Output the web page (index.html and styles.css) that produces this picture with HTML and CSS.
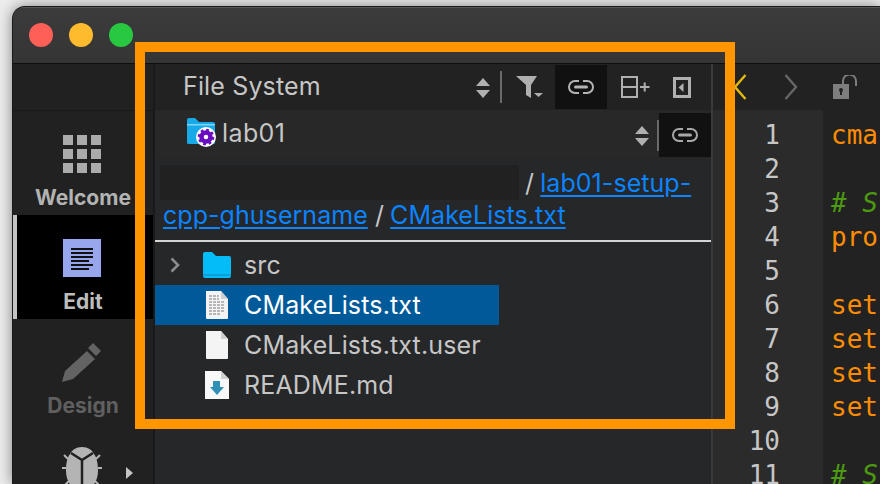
FILE: index.html
```html
<!DOCTYPE html>
<html lang="en">
<head>
<meta charset="utf-8">
<title>Qt Creator</title>
<link rel="stylesheet" href="styles.css">
</head>
<body>
<div class="window">
  <header class="titlebar">
    <span class="light red"></span><span class="light yellow"></span><span class="light green"></span>
  </header>
  <div class="main">
    <nav class="modes">
      <div class="modes-top"></div>
      <div class="mode">
        <svg class="mode-icon" width="40" height="40" viewBox="0 0 40 40"><g fill="#ababab"><rect x="1" y="1" width="10" height="10"/><rect x="15" y="1" width="10" height="10"/><rect x="29" y="1" width="10" height="10"/><rect x="1" y="15" width="10" height="10"/><rect x="15" y="15" width="10" height="10"/><rect x="29" y="15" width="10" height="10"/><rect x="1" y="29" width="10" height="10"/><rect x="15" y="29" width="10" height="10"/><rect x="29" y="29" width="10" height="10"/></g></svg>
        <span>Welcome</span>
      </div>
      <div class="mode active">
        <svg class="mode-icon" width="40" height="40" viewBox="0 0 40 40"><rect x="1" y="1" width="38" height="38" fill="#98a6ee"/><g fill="#111"><rect x="9" y="10" width="22" height="2"/><rect x="9" y="14" width="22" height="2"/><rect x="9" y="18" width="22" height="2"/><rect x="9" y="22" width="18" height="2"/><rect x="9" y="26" width="22" height="2"/><rect x="9" y="30" width="18" height="2"/></g></svg>
        <span>Edit</span>
      </div>
      <div class="mode disabled">
        <svg class="mode-icon" width="40" height="40" viewBox="0 0 40 40"><path d="M0 40 L3 29 L25 9 L33 17 L11 37 Z M31 1 L39 9 L34 14 L26 6 Z" fill="#636363"/></svg>
        <span>Design</span>
      </div>
      <div class="mode debug">
        <svg class="mode-icon" width="40" height="44" viewBox="0 0 40 44"><g stroke="#b4b4b4" stroke-width="2"><path d="M6 12 L2 8 M34 12 L38 8 M4 21 H0 M36 21 H40 M7 34 L3 38 M33 34 L37 38"/></g><path d="M20 0 C26 0 30 3 32 7 C35 11 36 17 36 24 C36 36 28 44 20 44 C12 44 4 36 4 24 C4 17 5 11 8 7 C10 3 14 0 20 0 Z" fill="#b4b4b4"/><path d="M9 6 L20 13 L31 6 M20 13 V44" fill="none" stroke="#212121" stroke-width="2.5"/></svg>
        <svg class="arrow" width="7" height="12" viewBox="0 0 7 12"><path d="M0 0 L7 6 L0 12 Z" fill="#c4c4c4"/></svg>
      </div>
    </nav>

    <section class="panel">
      <div class="panel-head">
        <span class="panel-title">File System</span>
        <svg class="updown" width="14" height="20" viewBox="0 0 14 20"><path d="M7 0 L14 8 H0 Z M0 12 H14 L7 20 Z" fill="#b0b0b0"/></svg>
        <span class="vsep"></span>
        <svg class="tool filter" width="27" height="22" viewBox="0 0 27 22"><path d="M0 0 H21 L15 9 V22 L10 19 V9 Z" fill="#b0b0b0"/><path d="M18 17 H27 L22.5 21 Z" fill="#b0b0b0"/></svg>
        <span class="linkbtn">
          <svg width="28" height="16" viewBox="0 0 28 16"><path d="M12 2 H8 A6 6 0 0 0 8 14 H12 M16 2 H20 A6 6 0 0 1 20 14 H16" fill="none" stroke="#b4b4b4" stroke-width="2"/><rect x="7" y="6.5" width="14" height="3" rx="1.5" fill="#b4b4b4"/></svg>
        </span>
        <svg class="tool split" width="29" height="22" viewBox="0 0 29 22"><rect x="1" y="1" width="15" height="20" fill="none" stroke="#b0b0b0" stroke-width="2"/><path d="M1 11 H16 M19 11 H28.500 M23.700 6.500 V15.500" stroke="#b0b0b0" stroke-width="2" fill="none"/></svg>
        <svg class="tool collapse" width="18" height="21" viewBox="0 0 18 21"><rect x="1.500" y="1.500" width="15" height="18" fill="none" stroke="#b0b0b0" stroke-width="3"/><path d="M10.500 6 V15 L5.500 10.500 Z" fill="#b0b0b0"/></svg>
      </div>
      <div class="panel-sub">
        <svg class="proj-icon" width="31" height="31" viewBox="0 0 31 31">
          <path d="M1 3 Q1 1 3 1 H9 L13 5 H27 Q29 5 29 7 V26 Q29 27 27 27 H3 Q1 27 1 26 Z" fill="#18a9e8"/>
          <rect x="1" y="7" width="28" height="1.500" fill="#7fd6f8"/>
          <circle cx="20" cy="20" r="10" fill="#fff"/>
          <circle cx="20" cy="20" r="4.500" fill="none" stroke="#6a0dc0" stroke-width="4.500"/>
          <circle cx="20" cy="20" r="7.200" fill="none" stroke="#6a0dc0" stroke-width="2.200" stroke-dasharray="2.800 2.850"/>
        </svg>
        <span class="proj-name">lab01</span>
        <svg class="updown" width="14" height="20" viewBox="0 0 14 20"><path d="M7 0 L14 8 H0 Z M0 12 H14 L7 20 Z" fill="#b0b0b0"/></svg>
        <span class="vsep"></span>
        <span class="linkbtn sub">
          <svg width="28" height="16" viewBox="0 0 28 16"><path d="M12 2 H8 A6 6 0 0 0 8 14 H12 M16 2 H20 A6 6 0 0 1 20 14 H16" fill="none" stroke="#a8a8a8" stroke-width="2"/><rect x="7" y="6.500" width="14" height="3" rx="1.500" fill="#a8a8a8"/></svg>
        </span>
      </div>
      <div class="crumbs">
        <span class="redact"></span> <span class="slash">/</span> <a class="link">lab01-setup-cpp-ghusername</a> <span class="slash">/</span> <a class="link">CMakeLists.txt</a>
      </div>
      <ul class="tree">
        <li class="row">
          <svg class="twisty" width="10" height="16" viewBox="0 0 10 16"><path d="M1.500 1.500 L8 8 L1.500 14.500" fill="none" stroke="#8c8c8c" stroke-width="2.600"/></svg>
          <svg class="ficon" width="30" height="28" viewBox="0 0 30 28"><path d="M1 3 Q1 1 3 1 H10 L14 5 H27 Q29 5 29 7 V25 Q29 27 27 27 H3 Q1 27 1 25 Z" fill="#04bcf7"/><rect x="1" y="23" width="28" height="2" fill="#0aa0d8"/></svg>
          <span>src</span>
        </li>
        <li class="row selected">
          <svg class="twisty hidden" width="10" height="16" viewBox="0 0 10 16"></svg>
          <svg class="ficon" width="30" height="30" viewBox="0 0 30 30"><path d="M4 1 H19 L26 9 V28 Q26 29 25 29 H5 Q4 29 4 28 Z" fill="#f4f4f4"/><path d="M19 1 V9 H26 Z" fill="#cfcfcf"/><path d="M7 6 H17 M7 9 H17 M7 12 H23 M7 15 H23 M7 18 H23 M7 21 H23 M7 24 H19" stroke="#a4a4a4" stroke-width="1.400" stroke-dasharray="3 1"/></svg>
          <span>CMakeLists.txt</span>
        </li>
        <li class="row">
          <svg class="twisty hidden" width="10" height="16" viewBox="0 0 10 16"></svg>
          <svg class="ficon" width="30" height="30" viewBox="0 0 30 30"><path d="M4 1 H19 L26 9 V28 Q26 29 25 29 H5 Q4 29 4 28 Z" fill="#f4f4f4"/><path d="M19 1 V9 H26 Z" fill="#cfcfcf"/></svg>
          <span>CMakeLists.txt.user</span>
        </li>
        <li class="row">
          <svg class="twisty hidden" width="10" height="16" viewBox="0 0 10 16"></svg>
          <svg class="ficon" width="30" height="30" viewBox="0 0 30 30"><path d="M3 1 H19 L27 9 V29 H3 Z" fill="#f8f8f8"/><path d="M19 1 V9 H27 Z" fill="#d0d0d0"/><path d="M11 11 H18 V17 H22 L15 25 L8 17 H11 Z" fill="#2f8fb5"/></svg>
          <span>README.md</span>
        </li>
      </ul>
    </section>

    <section class="editor">
      <div class="editor-head">
        <svg class="nav" width="14" height="26" viewBox="0 0 14 26"><path d="M12.500 1 L2 13 L12.500 25" fill="none" stroke="#e3bb10" stroke-width="2.400"/></svg>
        <svg class="nav" width="14" height="26" viewBox="0 0 14 26"><path d="M1.500 1 L12 13 L1.500 25" fill="none" stroke="#666" stroke-width="2.400"/></svg>
        <svg class="lock" width="24" height="24" viewBox="0 0 24 24"><rect x="0" y="9" width="16" height="15" fill="#7e7e7e"/><circle cx="8" cy="15" r="2" fill="#222"/><rect x="7" y="15" width="2" height="5" fill="#222"/><path d="M10 9 V6 A6 6 0 0 1 23 6 V11" fill="none" stroke="#7e7e7e" stroke-width="2"/></svg>
      </div>
      <div class="code">
        <div class="gutter"><div>1</div><div>2</div><div>3</div><div>4</div><div>5</div><div>6</div><div>7</div><div>8</div><div>9</div><div>10</div><div>11</div></div>
        <div class="source">
          <div class="kw">cma</div><div>&nbsp;</div><div class="cm"># S</div><div class="kw">pro</div><div>&nbsp;</div><div class="kw">set</div><div class="kw">set</div><div class="kw">set</div><div class="kw">set</div><div>&nbsp;</div><div class="cm"># S</div>
        </div>
      </div>
    </section>
  </div>
  <div class="highlight"></div>
</div>
</body>
</html>
```
FILE: styles.css
```css
* { box-sizing: border-box; }
html, body { margin: 0; height: 100%; }
body {
  width: 880px;
  height: 484px;
  overflow: hidden;
  background: #ececec;
  padding: 6px 0 0 12px;
  font-family: Inter, "Liberation Sans", Arial, sans-serif;
}
.window {
  position: relative;
  width: 868px;
  height: 478px;
  border-radius: 13px 0 0 0;
  background: #383838;
  box-shadow: 0 0 14px rgba(0, 0, 0, .45);
  overflow: hidden;
  border-top: 1px solid #1a1a1a;
  border-left: 1px solid #1a1a1a;
  display: flex;
  flex-direction: column;
}
.titlebar {
  height: 57px;
  flex: none;
  background: linear-gradient(#3b3b3b, #353535);
  border-top: 1px solid #555;
  border-bottom: 1px solid #0e0e0e;
  display: flex;
  align-items: flex-start;
  gap: 16px;
  padding: 15px 0 0 16px;
}
.light { width: 24px; height: 24px; border-radius: 50%; }
.red { background: #fe5f57; }
.yellow { background: #febb2d; }
.green { background: #28c840; }
.main { flex: 1; display: flex; min-height: 0; background: #262729; }

.modes { width: 142px; flex: none; background: #212121; border-right: 2px solid #191919; display: flex; flex-direction: column; }
.modes-top { height: 47px; flex: none; border-bottom: 1px solid #191919; }
.mode { height: 104px; flex: none; display: flex; flex-direction: column; align-items: center; color: #b3b3b3; font-size: 21px; font-weight: 700; position: relative; padding-top: 23px; gap: 12px; line-height: 24px; }
.mode-icon { display: block; flex: none; margin-right: 2px; }
.mode.active { background: #000; border-left: 4px solid #c4c4c4; color: #bdbdbd; padding-right: 4px; }
.mode.disabled { color: #5f5f5f; }
.mode.debug { padding-top: 24px; }
.arrow { position: absolute; left: 113px; top: 44px; }

.panel { width: 558px; flex: none; background: #262729; border-right: 2px solid #3a3a3a; display: flex; flex-direction: column; }
.panel-head { height: 46px; flex: none; background: #222; display: flex; align-items: center; padding-left: 28px; }
.panel-title { color: #c6c6c6; font-size: 25px; letter-spacing: .15px; flex: 1; margin-top: -3px; }
.vsep { width: 2px; height: 32px; background: #6a6a6a; }
.panel-head .updown { margin-right: 10px; margin-top: 1px; }
.tool.filter { margin-left: 14px; margin-right: 12px; }
.linkbtn { width: 52px; height: 44px; background: #111; display: flex; align-items: center; justify-content: center; }
.tool.split { margin-left: 14px; margin-right: 23px; }
.tool.collapse { margin-right: 20px; }
.panel-sub { height: 47px; flex: none; background: #282828; display: flex; align-items: center; padding-left: 31px; }
.proj-icon { margin-right: 5px; margin-top: -2px; }
.proj-name { color: #c6c6c6; font-size: 25px; letter-spacing: .4px; flex: 1; margin-top: -2px; }
.panel-sub .updown { margin-right: 8px; margin-top: 4px; }
.panel-sub .vsep { height: 31px; margin-top: 3px; }
.linkbtn.sub { margin-top: 3px; }
.crumbs { height: 85px; flex: none; padding: 10px 16px 0 8px; color: #c6c6c6; font-size: 25px; letter-spacing: .05px; line-height: 32px; border-bottom: 2px solid #d4d4d4; }
.redact { display: inline-block; width: 359px; height: 35px; background: #212121; vertical-align: top; margin: -2px -1px -1px -3px; }
.link { color: #0a84ff; text-decoration: underline; text-underline-offset: 3px; }
.slash { color: #c6c6c6; margin-right: -1px; }
.tree { list-style: none; margin: 0; padding: 3px 0 0; }
.row { height: 40px; display: flex; align-items: center; color: #c6c6c6; font-size: 25px; letter-spacing: .15px; padding-left: 15px; width: 344px; }
.row span { margin-left: 12px; margin-top: -1px; }
.row .ficon { margin-left: 22px; }
.row.selected { background: #005a99; color: #fff; }
.twisty.hidden { visibility: hidden; }

.editor { flex: 1; min-width: 0; background: #222; display: flex; flex-direction: column; }
.editor-head { height: 46px; flex: none; display: flex; align-items: center; background: #222; padding-left: 20px; }
.nav { margin-right: 37px; }
.lock { margin-left: -2px; }
.code { flex: 1; display: flex; overflow: hidden; font-family: "DejaVu Sans Mono", monospace; font-size: 26px; line-height: 34px; }
.gutter { width: 110px; flex: none; background: #2b2b2b; color: #c6c6c6; text-align: right; padding: 8px 43px 0 0; }
.source { flex: 1; padding: 8px 0 0 8px; white-space: nowrap; overflow: hidden; background: #222; }
.kw { color: #ff8c00; }
.cm { color: #4c9a10; font-style: italic; }

.highlight { position: absolute; left: 122px; top: 35px; width: 600px; height: 387px; border: 10px solid #ff9500; pointer-events: none; }
```
